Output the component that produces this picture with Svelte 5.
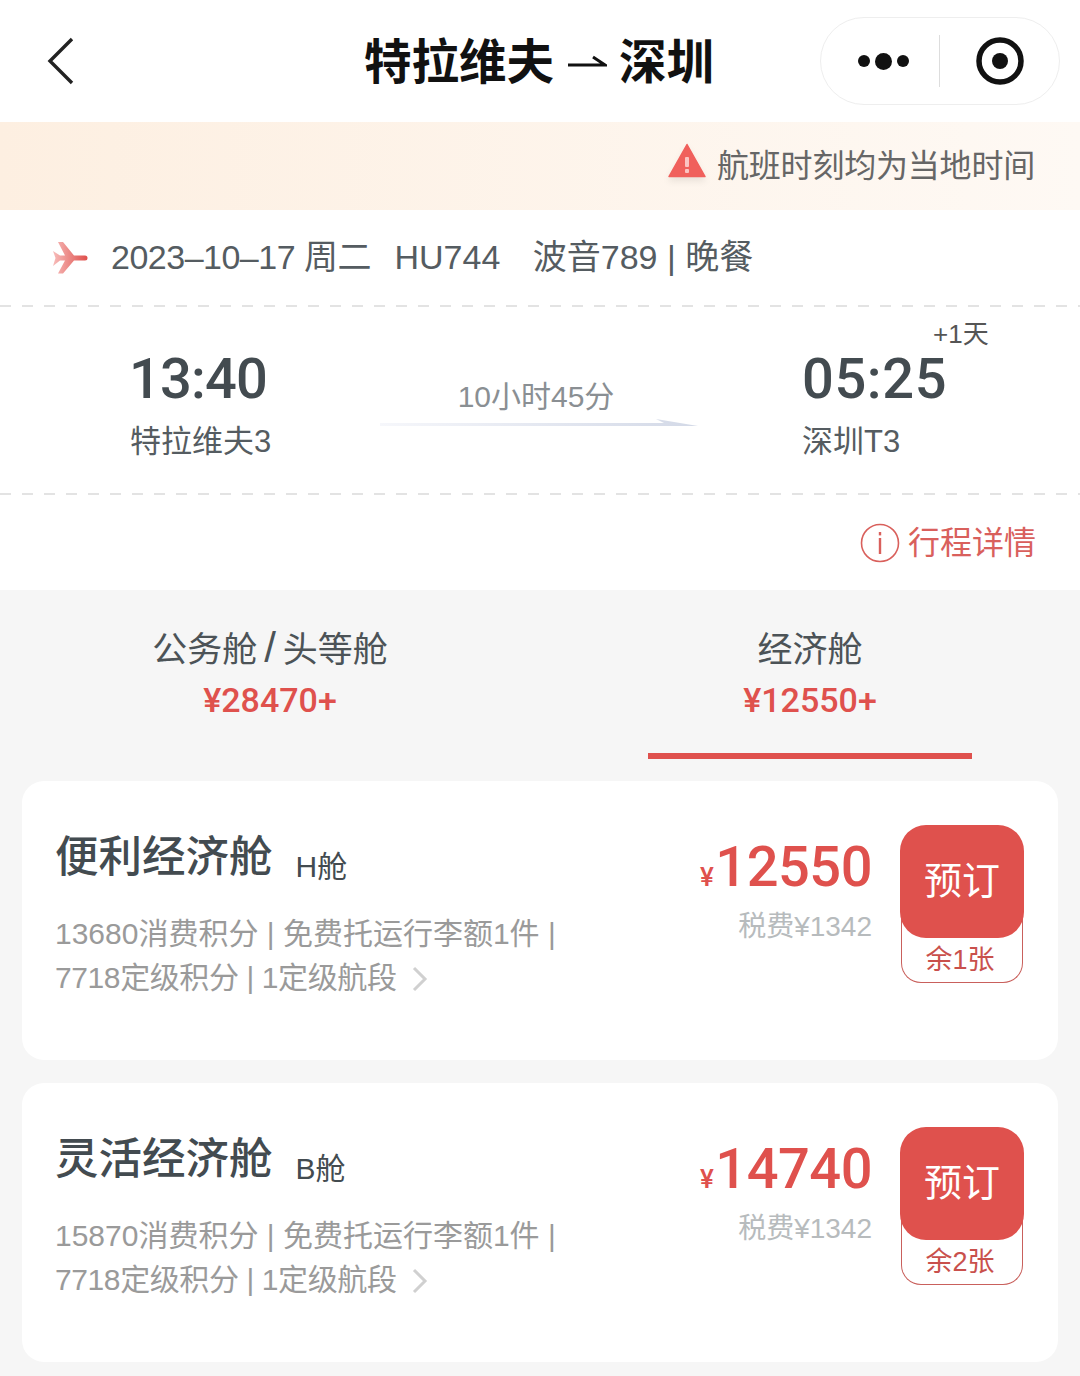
<script>
  const fares = [
    { name: '便利经济舱', code: 'H舱', line1: '13680消费积分 | 免费托运行李额1件 |', line2: '7718定级积分 | 1定级航段', price: '12550', tax: '税费¥1342', left: '余1张' },
    { name: '灵活经济舱', code: 'B舱', line1: '15870消费积分 | 免费托运行李额1件 |', line2: '7718定级积分 | 1定级航段', price: '14740', tax: '税费¥1342', left: '余2张' }
  ];
</script>

<div class="page">
  <header class="nav">
    <svg class="back" width="30" height="48" viewBox="0 0 30 48" fill="none">
      <path d="M26 2 L4 24 L26 46" stroke="#222" stroke-width="3.4" />
    </svg>
    <h1 class="title">
      <span>特拉维夫</span>
      <svg width="41" height="20" viewBox="0 0 41 20" fill="none">
        <path d="M2 12 H39 L27 4" stroke="#111" stroke-width="3" />
      </svg>
      <span>深圳</span>
    </h1>
    <div class="capsule">
      <div class="dots"><i></i><b></b><i></i></div>
      <div class="sep"></div>
      <svg width="48" height="48" viewBox="0 0 48 48" fill="none">
        <circle cx="24" cy="24" r="21" stroke="#111" stroke-width="5.5" />
        <circle cx="24" cy="24" r="8" fill="#111" />
      </svg>
    </div>
  </header>

  <div class="notice">
    <svg width="38" height="35" viewBox="0 0 38 35">
      <path d="M19 1.5 L37 33.5 H1 Z" fill="#f0605c" stroke="#f0605c" stroke-width="1.5" stroke-linejoin="round" />
      <rect x="17" y="14" width="4" height="10" rx="1" fill="#fbc4c2" />
      <rect x="17" y="26" width="4" height="4" rx="1" fill="#fbc4c2" />
    </svg>
    <span>航班时刻均为当地时间</span>
  </div>

  <div class="info">
    <svg width="36" height="34" viewBox="12 10 36 34">
      <defs>
        <linearGradient id="plane" x1="0" x2="1" y1="0" y2="0">
          <stop offset="0" stop-color="#f7bcba" />
          <stop offset="1" stop-color="#df4f4b" />
        </linearGradient>
      </defs>
      <path
        d="M13 20 L20 24.5 H25 L18 11 H23 L34 24.5 H45 Q47.5 24.5 47.5 27 Q47.5 29.5 45 29.5 H34 L23 42.5 H18 L25 29.5 H20 L13 35 L15.5 27 Z"
        fill="url(#plane)"
      />
    </svg>
    <div class="info-text">
      <span class="date">2023–10–17 周二</span>
      <span class="no">HU744</span>
      <span class="plane">波音789 | 晚餐</span>
    </div>
  </div>

  <div class="flight">
    <div class="point dep">
      <div class="time">13:40</div>
      <div class="port">特拉维夫3</div>
    </div>
    <div class="mid">
      <div class="dur">10小时45分</div>
      <svg width="318" height="10" viewBox="0 0 318 10">
        <defs>
          <linearGradient id="line" x1="0" x2="1" y1="0" y2="0">
            <stop offset="0" stop-color="#f6f7fb" />
            <stop offset="1" stop-color="#d3d9e7" />
          </linearGradient>
        </defs>
        <path d="M0 4 H284 L276 0 L318 7 H0 Z" fill="url(#line)" />
      </svg>
    </div>
    <div class="point arr">
      <div class="time">05:25<span class="plus">+1天</span></div>
      <div class="port">深圳T3</div>
    </div>
  </div>

  <div class="detail">
    <svg width="40" height="40" viewBox="0 0 40 40" fill="none">
      <circle cx="20" cy="20" r="18.5" stroke="#d9605c" stroke-width="1.6" />
      <rect x="18.8" y="9" width="2.4" height="3.4" fill="#d9605c" />
      <rect x="18.8" y="15" width="2.4" height="16" fill="#d9605c" />
    </svg>
    <span>行程详情</span>
  </div>

  <section class="lower">
    <div class="tabs">
      <div class="tab">
        <div class="tab-name">公务舱<span class="slash">/</span>头等舱</div>
        <div class="tab-price">¥28470+</div>
      </div>
      <div class="tab active">
        <div class="tab-name">经济舱</div>
        <div class="tab-price">¥12550+</div>
      </div>
    </div>

    {#each fares as f}
      <article class="card">
        <div class="fare">
          <div class="fare-head">
            <span class="fare-name">{f.name}</span>
            <span class="fare-code">{f.code}</span>
          </div>
          <div class="fare-desc">
            <div>{f.line1}</div>
            <div class="line2">{f.line2}
              <svg class="chev" width="16" height="26" viewBox="0 0 16 26" fill="none">
                <path d="M2 2 L13 13 L2 24" stroke="#d0d0d0" stroke-width="3" />
              </svg>
            </div>
          </div>
        </div>
        <div class="pricing">
          <div class="price"><small>¥</small>{f.price}</div>
          <div class="tax">{f.tax}</div>
        </div>
        <div class="book">
          <div class="book-btn">预订</div>
          <div class="book-left">{f.left}</div>
        </div>
      </article>
    {/each}
  </section>
</div>

<style>
  :global(body) {
    margin: 0;
    background: #fff;
  }

  .page {
    width: 1080px;
    height: 1376px;
    overflow: hidden;
    font-family: "Liberation Sans", "Noto Sans CJK SC", sans-serif;
    color: #434b50;
  }

  .nav {
    height: 122px;
    display: flex;
    align-items: center;
    position: relative;
    padding: 0 20px 0 46px;
    box-sizing: border-box;
  }

  .back {
    margin-top: -1px;
  }

  .title {
    position: absolute;
    left: 364px;
    top: 34px;
    margin: 0;
    display: flex;
    align-items: center;
    gap: 12px;
    font-size: 47.5px;
    font-weight: 700;
    line-height: 58px;
    color: #111;
  }

  .capsule {
    margin-left: auto;
    width: 240px;
    height: 88px;
    box-sizing: border-box;
    border: 1px solid #eeeeee;
    border-radius: 44px;
    display: flex;
    align-items: center;
    padding-left: 37px;
  }

  .dots {
    display: flex;
    align-items: center;
    gap: 5px;
    width: 52px;
  }

  .dots i {
    width: 12px;
    height: 12px;
    border-radius: 50%;
    background: #111;
  }

  .dots b {
    width: 17px;
    height: 17px;
    border-radius: 50%;
    background: #111;
  }

  .sep {
    width: 1px;
    height: 52px;
    background: #ddd;
    margin: 0 36px 0 29px;
  }

  .notice {
    height: 88px;
    display: flex;
    align-items: center;
    justify-content: flex-end;
    gap: 11px;
    padding-right: 45px;
    background: linear-gradient(90deg, #fdefe1, #fef9f4);
    font-size: 32px;
    letter-spacing: -0.2px;
    color: #666;
  }

  .notice span {
    margin-bottom: 6px;
  }

  .notice svg {
    margin-bottom: 11px;
    filter: drop-shadow(0 4px 3px rgba(0, 0, 0, 0.08));
  }

  .info {
    height: 97px;
    display: flex;
    align-items: center;
    padding: 0 0 9px 52px;
    font-size: 34px;
    color: #555c61;
    background: repeating-linear-gradient(90deg, #e3e3e3 0 11px, transparent 11px 22px) left bottom / 100% 2px no-repeat;
    box-sizing: border-box;
  }

  .info svg {
    margin-top: 8px;
  }

  .info-text {
    white-space: nowrap;
  }

  .date {
    margin-left: 23px;
    letter-spacing: -0.5px;
  }

  .no {
    margin-left: 14px;
  }

  .plane {
    margin-left: 23px;
  }

  .flight {
    height: 188px;
    display: flex;
    box-sizing: border-box;
    background: repeating-linear-gradient(90deg, #e3e3e3 0 11px, transparent 11px 22px) left bottom / 100% 2px no-repeat;
    position: relative;
  }

  .point {
    padding-top: 37px;
  }

  .dep {
    margin-left: 130px;
    width: 250px;
  }

  .dep .time {
    margin-left: -1px;
  }

  .arr {
    margin-left: 104px;
  }

  .time {
    font-family: Roboto, sans-serif;
    font-size: 56px;
    line-height: 70px;
    font-weight: 500;
    letter-spacing: -0.8px;
    color: #434b50;
    position: relative;
  }

  .arr .time {
    letter-spacing: 0.6px;
  }

  .plus {
    position: absolute;
    left: 131px;
    top: -26px;
    font-family: "Liberation Sans", "Noto Sans CJK SC", sans-serif;
    font-size: 26px;
    line-height: 32px;
    font-weight: 400;
    letter-spacing: 0;
    color: #555;
    white-space: nowrap;
  }

  .port {
    font-size: 31px;
    line-height: 40px;
    margin-top: 8px;
    color: #555c61;
  }

  .mid {
    width: 318px;
    padding-top: 71px;
    text-align: center;
  }

  .mid svg {
    display: block;
  }

  .dur {
    font-size: 30px;
    line-height: 38px;
    color: #8a8f93;
    margin-bottom: 3px;
    padding-right: 6px;
  }

  .detail {
    height: 95px;
    display: flex;
    align-items: center;
    justify-content: flex-end;
    gap: 8px;
    padding: 0 44px 5px 0;
    box-sizing: border-box;
    font-size: 32px;
    color: #d9605c;
  }

  .detail svg {
    margin-top: 6px;
  }

  .lower {
    background: #f6f6f6;
    height: 786px;
    padding: 0 22px;
    box-sizing: border-box;
  }

  .tabs {
    display: grid;
    grid-template-columns: 496px 1fr;
    height: 191px;
  }

  .tab {
    text-align: center;
    padding-top: 37px;
    height: 169px;
    box-sizing: border-box;
  }

  .tab.active {
    width: 324px;
    margin-left: 130px;
    border-bottom: 6px solid #df514d;
  }

  .tab-name {
    font-size: 35px;
    line-height: 46px;
    color: #4c5357;
  }

  .slash {
    margin: 0 7px;
    font-size: 42px;
    line-height: 0;
  }

  .tab-price {
    font-family: Roboto, sans-serif;
    font-size: 34px;
    line-height: 40px;
    margin-top: 7px;
    font-weight: 500;
    color: #df514d;
  }

  .card {
    height: 279px;
    margin-bottom: 23px;
    background: #fff;
    border-radius: 22px;
    display: flex;
    box-sizing: border-box;
    padding: 44px 34px 0;
  }

  .fare {
    flex: 1;
    padding-top: 4px;
  }

  .fare-head {
    display: flex;
    align-items: flex-end;
    gap: 23px;
  }

  .fare-name {
    font-size: 43.5px;
    line-height: 56px;
    font-weight: 500;
    margin-left: -1px;
    color: #434b50;
  }

  .fare-code {
    font-size: 30px;
    line-height: 36px;
    color: #434b50;
  }

  .fare-desc {
    margin: 27px 0 0 -1px;
    font-size: 30px;
    line-height: 44px;
    color: #9a9a9a;
  }

  .line2 {
    letter-spacing: -0.4px;
  }

  .chev {
    vertical-align: -4px;
    margin-left: 8px;
  }

  .pricing {
    text-align: right;
    margin-right: 28px;
    padding-top: 11px;
  }

  .price {
    font-family: Roboto, sans-serif;
    font-size: 56px;
    line-height: 62px;
    font-weight: 500;
    letter-spacing: -0.5px;
    color: #df514d;
  }

  .price small {
    font-size: 26px;
    margin-right: 2px;
  }

  .tax {
    font-size: 28px;
    line-height: 36px;
    margin-top: 1px;
    color: #b7bbbd;
  }

  .book {
    width: 124px;
    text-align: center;
  }

  .book-btn {
    height: 113px;
    line-height: 112px;
    background: #df514d;
    border-radius: 26px;
    color: #fff;
    font-size: 38px;
    position: relative;
  }

  .book-left {
    width: 122px;
    height: 71px;
    margin: -26px 0 0 1px;
    padding: 26px 4px 0 0;
    box-sizing: border-box;
    border: 1.5px solid #c9605c;
    border-top: 0;
    border-radius: 0 0 20px 20px;
    font-size: 27px;
    line-height: 44px;
    color: #c9504c;
  }
</style>
